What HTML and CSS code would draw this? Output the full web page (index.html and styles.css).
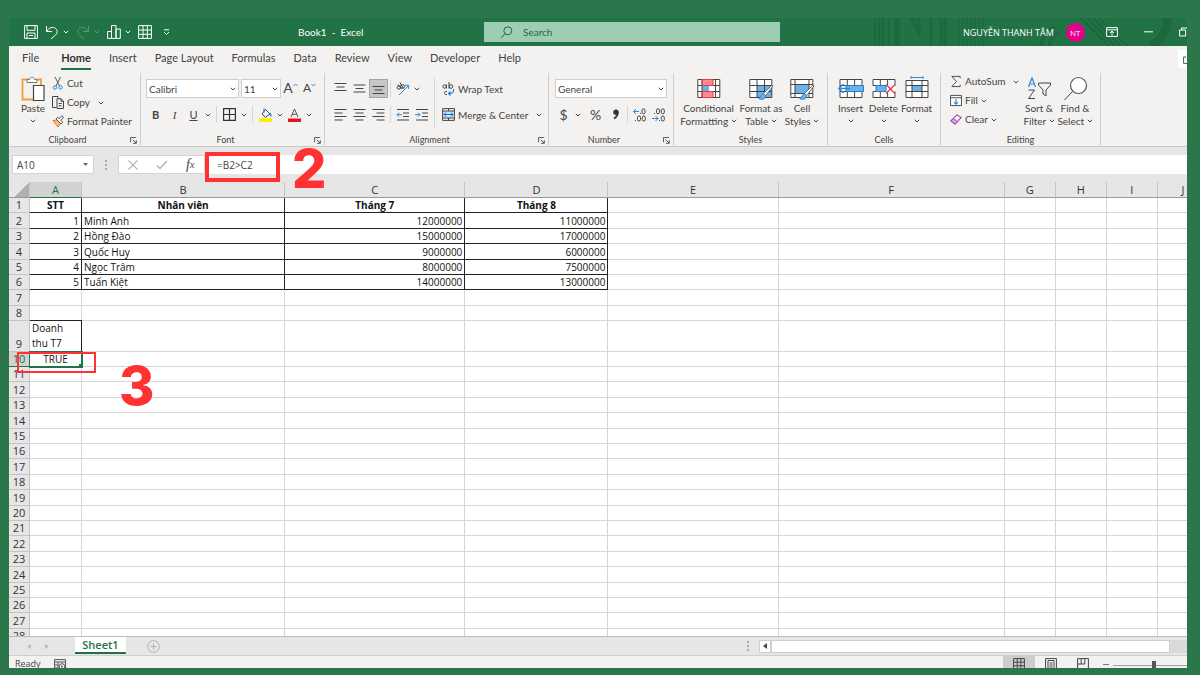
FILE: index.html
```html
<!DOCTYPE html>
<html lang="vi">
<head>
  <meta charset="UTF-8" />
  <meta name="viewport" content="width=device-width, initial-scale=1.0"/>
  <title>Book1 - Excel</title>
  <link rel="stylesheet" href="styles.css">
</head>
<body>
  <!-- Shared icons -->
  <svg class="defs" width="0" height="0">
    <symbol id="chev" viewBox="0 0 6 4"><path d="M.8.8 3 3 5.2.8" fill="none" stroke="currentColor"/></symbol>
    <symbol id="launch" viewBox="0 0 8 8"><path d="M.5 6V.5H7M3 3l4 4M7.2 3.5v3.7H3.5" fill="none" stroke="currentColor"/></symbol>
    <symbol id="brush" viewBox="0 0 16 18"><path d="M15 1 6 10l2 2.4L16 2z" fill="#fff" stroke="#555" stroke-width=".9"/><path d="M6 10.2c-2.300.3-2.500 3-5 5.300 3 1.500 7 .5 7.300-3z" fill="#6cb2ea" stroke="#2b7cc2"/></symbol>
  </svg>

  <div class="window">
    <header class="titlebar">
      <svg class="pattern" width="314" height="28" viewBox="0 0 314 28">
        <g stroke="#1b6039" fill="none" opacity=".55">
          <path d="M2 0v28M6 0v28M10 0v28M16 0v28" stroke-width="2"/>
          <path d="M24 0v28" stroke-width="5"/>
          <path d="M38 0h8v14zM58 0v28M68 0v28M72 0v28" stroke-width="3"/>
          <path d="M86 0v28M90 0v28M94 0v28M98 0v28M102 0v28M106 0v28M110 0v28"/>
          <path d="M168 28c2-10 6-16 14-20M176 28c2-8 5-12 10-14" stroke-width="3"/>
          <path d="M208 0l28 28M214 0l28 28M220 0l28 28M226 0l28 28" stroke-width="2"/>
          <path d="M294 0c1 12-5 21-16 28" stroke-width="9"/>
        </g>
      </svg>
      <div class="quick">
        <button aria-label="Save"><svg width="14" height="14" viewBox="0 0 14 14"><path d="M.6.6h12.800v12.800H.6zM3 .6v4.700h8V.6M3 13.400V8h8v5.400M5 10.500h4" class="line"/></svg></button>
        <button aria-label="Undo" class="undo"><svg width="14" height="15" viewBox="0 0 14 15"><path d="M1.500 1v5.500H7M1.700 6.300C4 2.500 8 1.200 10.700 3.500c2.600 2.500 1.400 5-.5 6.800L6 14" class="line"/></svg><svg class="chev"><use href="#chev"/></svg></button>
        <button aria-label="Redo" class="redo"><svg width="14" height="15" viewBox="0 0 14 15"><path d="M12.500 1v5.500H7M12.300 6.300C10 2.500 6 1.200 3.300 3.500c-2.600 2.500-1.400 5 .5 6.800L8 14" class="line"/></svg><svg class="chev"><use href="#chev"/></svg></button>
        <button aria-label="Chart"><svg width="14" height="14" viewBox="0 0 14 14"><path d="M.6 6.500h3.900v6.900H.6zM4.500.6H9v12.800H4.500zM9 4h4.300v9.400H9z" class="line"/></svg><svg class="chev"><use href="#chev"/></svg></button>
        <button aria-label="Table"><svg width="14" height="14" viewBox="0 0 14 14"><path d="M.6.6h12.800v12.800H.6zM5 .6v12.800M9.300.6v12.800M.6 5h12.800M.6 9.300h12.800" class="line"/></svg></button>
        <button aria-label="Customize" class="more"><svg width="7" height="7" viewBox="0 0 7 7"><path d="M1 .8h5M1 3l2.500 2.500L6 3" class="line"/></svg></button>
      </div>
      <h1 class="book">Book1&nbsp; -&nbsp; Excel</h1>
      <label class="search">
        <svg width="13" height="13" viewBox="0 0 13 13"><circle cx="7.800" cy="4.800" r="4" class="line"/><path d="M5 7.700.8 12.200" class="line"/></svg>
        <input type="text" placeholder="Search" aria-label="Search">
      </label>
      <div class="account">
        <span class="user">NGUYỄN THANH TÂM</span>
        <span class="avatar">NT</span>
        <button aria-label="Ribbon display"><svg width="12" height="10" viewBox="0 0 12 10"><path d="M.6.6h10.800v8.800H.6zM.6 2.800h10.800M6 8.500V4.500M4 6l2-2 2 2" class="line"/></svg></button>
        <button aria-label="Minimize"><svg width="9" height="10" viewBox="0 0 9 10"><path d="M0 4.800h9" class="line"/></svg></button>
        <button aria-label="Restore"><svg width="9" height="10" viewBox="0 0 9 10"><path d="M.6 3h6v6h-6zM2.500 3V1H9v6" class="line"/></svg></button>
      </div>
    </header>

    <nav class="tabs">
      <a href="#">File</a>
      <a href="#" class="active">Home</a>
      <a href="#">Insert</a>
      <a href="#">Page Layout</a>
      <a href="#">Formulas</a>
      <a href="#">Data</a>
      <a href="#">Review</a>
      <a href="#">View</a>
      <a href="#">Developer</a>
      <a href="#">Help</a>
      <button class="share" aria-label="Share"><svg width="9" height="9" viewBox="0 0 9 9"><path d="M8 2H5.600v6.400H9" class="line"/></svg></button>
    </nav>

    <div class="ribbon">
      <section class="group clipboard">
        <div class="group-body">
          <button class="big"><svg width="24" height="26" viewBox="0 0 24 26"><path d="M8 3.500H1.500v20h11M16 3.500h4V9" fill="none" stroke="#f0a030" stroke-width="1.800"/><path d="M6 3.500h2.500C9 .5 13 .5 13.500 3.500H16v3H6z" fill="#fff" stroke="#777"/><path d="M12.500 9.500h10.500v15H12.500z" fill="#fff" stroke="#444" stroke-width="1.200"/></svg><span>Paste</span><svg class="chev"><use href="#chev"/></svg></button>
          <div class="stack">
            <button><svg width="12" height="13" viewBox="0 0 12 13"><path d="m3 0 4.500 9M8.500 0 4 9" stroke="#555" fill="none"/><circle cx="3" cy="10.500" r="1.700" fill="none" stroke="#2b88d8"/><circle cx="8.500" cy="10.500" r="1.700" fill="none" stroke="#2b88d8"/></svg>Cut</button>
            <button><svg width="12" height="13" viewBox="0 0 12 13"><path d="M4.500 11.500H.5V.5H6v2" class="line"/><path d="M5 2.800h4.200L11.500 5v7.500H5zM9 3v2.300h2.400M6.700 7.500h3M6.700 9.800h3" class="line"/></svg>Copy<svg class="chev far"><use href="#chev"/></svg></button>
            <button><svg width="12" height="13" viewBox="0 0 12 13"><path d="M1 5.500 5 5l3.500 3.500L6 12z" fill="#f7c27e" stroke="#e07a1c"/><path d="m4 4 5 5 1.700-1.700L9 5.500 11.500 2 10 .8 7 3.500 5.600 2.300z" fill="#fff" stroke="#555"/></svg>Format Painter</button>
          </div>
        </div>
        <footer>Clipboard<svg class="launch"><use href="#launch"/></svg></footer>
      </section>

      <section class="group font">
        <div class="group-body rows">
          <div class="row">
            <select class="combo family" aria-label="Font"><option>Calibri</option></select>
            <select class="combo size" aria-label="Font size"><option>11</option></select>
            <button class="tool grow" aria-label="Increase font">A<svg width="5" height="4" viewBox="0 0 5 4"><path d="M.5 3l2-2 2 2" fill="none" stroke="#2b88d8"/></svg></button>
            <button class="tool shrink" aria-label="Decrease font">A<svg width="5" height="4" viewBox="0 0 5 4"><path d="M.5 1l2 2 2-2" fill="none" stroke="#2b88d8"/></svg></button>
          </div>
          <div class="row">
            <button class="tool"><b>B</b></button>
            <button class="tool"><i>I</i></button>
            <button class="tool"><u>U</u></button>
            <button class="drop" aria-label="Underline options"><svg class="chev"><use href="#chev"/></svg></button>
            <i class="sep"></i>
            <button class="tool" aria-label="Borders"><svg width="13" height="13" viewBox="0 0 13 13"><path d="M.6.6h11.800v11.800H.6zM6.500.6v11.800M.6 6.500h11.800" fill="none" stroke="#333" stroke-width="1.200"/></svg></button>
            <button class="drop" aria-label="Border options"><svg class="chev"><use href="#chev"/></svg></button>
            <i class="sep"></i>
            <button class="tool" aria-label="Fill color"><svg width="14" height="14" viewBox="0 0 14 14"><path d="M6.500 1.500 11 6 6.500 9.300 3 6z" class="line"/><path d="M5 .5v4M11 5c1 1.500 1.500 2.500.5 3.500" fill="none" stroke="#2b88d8" stroke-width="1.300"/><path d="M0 10.500h13V14H0z" fill="#ffee00"/></svg></button>
            <button class="drop" aria-label="Fill options"><svg class="chev"><use href="#chev"/></svg></button>
            <button class="tool" aria-label="Font color"><svg width="14" height="14" viewBox="0 0 14 14"><path d="m3 9 3.500-8L10 9M4.300 6.300h4.500" fill="none" stroke="#555"/><path d="M0 10.500h13V14H0z" fill="#e81123"/></svg></button>
            <button class="drop" aria-label="Color options"><svg class="chev"><use href="#chev"/></svg></button>
          </div>
        </div>
        <footer>Font<svg class="launch"><use href="#launch"/></svg></footer>
      </section>

      <section class="group align">
        <div class="group-body">
          <div class="rows">
            <div class="row">
              <button class="tool" aria-label="Top align"><svg class="ic" viewBox="0 0 13 13"><path d="M.5 1.500h12M2.500 5h8M.5 8.500h12" class="line"/></svg></button>
              <button class="tool" aria-label="Middle align"><svg class="ic" viewBox="0 0 13 13"><path d="M.5 3h12M2.500 6.500h8M.5 10h12" class="line"/></svg></button>
              <button class="tool on" aria-label="Bottom align"><svg class="ic" viewBox="0 0 13 13"><path d="M.5 4.500h12M2.500 8h8M.5 11.500h12" class="line"/></svg></button>
              <i class="sep thin"></i>
              <button class="tool" aria-label="Orientation"><svg width="14" height="14" viewBox="0 0 14 14"><circle cx="2.800" cy="5.500" r="1.700" class="line"/><circle cx="6.500" cy="4.500" r="1.900" class="line"/><path d="m2 2.500 3.500 4.500M4 .5 7 6" class="line"/><path d="M3 13 12.500 3.500M9 3.300h3.700V7" fill="none" stroke="#2b88d8"/></svg></button>
              <button class="drop" aria-label="Orientation options"><svg class="chev"><use href="#chev"/></svg></button>
            </div>
            <div class="row">
              <button class="tool" aria-label="Align left"><svg class="ic" viewBox="0 0 13 13"><path d="M.5 1.500h12M.5 5h8M.5 8.500h12M.5 12h8" class="line"/></svg></button>
              <button class="tool" aria-label="Center"><svg class="ic" viewBox="0 0 13 13"><path d="M.5 1.500h12M2.500 5h8M.5 8.500h12M2.500 12h8" class="line"/></svg></button>
              <button class="tool" aria-label="Align right"><svg class="ic" viewBox="0 0 13 13"><path d="M.5 1.500h12M4.500 5h8M.5 8.500h12M4.500 12h8" class="line"/></svg></button>
              <i class="sep thin"></i>
              <button class="tool" aria-label="Decrease indent"><svg class="ic" viewBox="0 0 13 13"><path d="M1 1.500h12M7 5h6M7 8.500h6M1 12h12" class="line"/><path d="M6 6.700H1M3 4.700l-2 2 2 2" fill="none" stroke="#2b88d8"/></svg></button>
              <button class="tool" aria-label="Increase indent"><svg class="ic" viewBox="0 0 13 13"><path d="M1 1.500h12M7 5h6M7 8.500h6M1 12h12" class="line"/><path d="M0 6.700h5M3 4.700l2 2-2 2" fill="none" stroke="#2b88d8"/></svg></button>
            </div>
          </div>
          <i class="sep tall"></i>
          <div class="rows">
            <button class="row"><svg width="13" height="14" viewBox="0 0 13 14"><circle cx="2.500" cy="4.500" r="1.700" class="line"/><path d="M4.500 2.500v4M7 0v6.500M5 9.500c-3-1-4 3.500 0 3" class="line"/><circle cx="9" cy="4.500" r="1.800" class="line"/><path d="M11.500 7v2c0 2-2 2.500-5 2.500M8.500 9.500l-2 2 2 2" fill="none" stroke="#2b88d8" stroke-width="1.200"/></svg>Wrap Text</button>
            <button class="row"><svg width="13" height="13" viewBox="0 0 13 13"><path d="M1 3h11v7H1z" fill="#cfe5f8"/><path d="M.6.6h11.800v11.800H.6zM.6 3h11.800M.6 10h11.800M6.500.6V3M6.500 10v2.400" class="line"/><path d="M2 6.500h9M4 4.500l-2 2 2 2M9 4.500l2 2-2 2" fill="none" stroke="#0b6fc4"/></svg>Merge &amp; Center<svg class="chev far"><use href="#chev"/></svg></button>
          </div>
        </div>
        <footer>Alignment<svg class="launch"><use href="#launch"/></svg></footer>
      </section>

      <section class="group number">
        <div class="group-body rows">
          <div class="row"><select class="combo format" aria-label="Number format"><option>General</option></select></div>
          <div class="row">
            <button class="tool sign">$</button>
            <button class="drop" aria-label="Currency options"><svg class="chev"><use href="#chev"/></svg></button>
            <button class="tool sign percent">%</button>
            <button class="tool" aria-label="Comma style"><svg width="8" height="11" viewBox="0 0 8 11"><circle cx="4" cy="3.200" r="2.700" fill="#333"/><path d="M5.500 3c.7 3-1 5-3.500 6.500" fill="none" stroke="#333" stroke-width="1.800"/></svg></button>
            <i class="sep thin"></i>
            <button class="tool" aria-label="Increase decimal"><svg width="13" height="14" viewBox="0 0 13 14"><path d="M6 3.500H.5M3 1 .5 3.500 3 6" fill="none" stroke="#2b88d8"/><rect x="9" y=".8" width="3" height="5" rx="1.500" class="line"/><rect x="4.500" y="8" width="3" height="5" rx="1.500" class="line"/><rect x="9.300" y="8" width="3" height="5" rx="1.500" class="line"/><path d="M2 12.500h1M7 5.500h1" class="line"/></svg></button>
            <button class="tool" aria-label="Decrease decimal"><svg width="13" height="14" viewBox="0 0 13 14"><path d="M0 10.500h6M3.500 8 6 10.500 3.500 13" fill="none" stroke="#2b88d8"/><rect x="4.500" y=".8" width="3" height="5" rx="1.500" class="line"/><rect x="9.300" y=".8" width="3" height="5" rx="1.500" class="line"/><rect x="9.300" y="8" width="3" height="5" rx="1.500" class="line"/><path d="M2 5.500h1M7 12.500h1" class="line"/></svg></button>
          </div>
        </div>
        <footer>Number<svg class="launch"><use href="#launch"/></svg></footer>
      </section>

      <section class="group styles">
        <div class="group-body">
          <button class="big wide"><svg width="24" height="26" viewBox="0 0 24 26"><path d="M.8 3.500h22v18h-22z" fill="#fff"/><path d="M5 3.500h11v6H5zM5 15.500h11v6H5z" fill="#ff8a8f"/><path d="M5 9.500h7v6H5z" fill="#6cb2ea"/><path d="M.8 3.500h22v18h-22zM.8 9.500h22M.8 15.500h22M5 3.500v18M18.500 3.500v18" class="line"/><path d="M5 3.500h11v6H5zM5 15.500h11v6H5z" fill="none" stroke="#e23b41"/></svg><span>Conditional<br>Formatting <svg class="chev"><use href="#chev"/></svg></span></button>
          <button class="big medium"><svg width="25" height="26" viewBox="0 0 25 26"><path d="M.8 3.500h22v18h-22z" fill="#fff"/><path d="M8 9.500h15v12H8z" fill="#6cb2ea"/><path d="M.8 3.500h22v18h-22zM.8 9.500h22M.8 15.500h22M8 3.500v18M15.500 3.500v18" class="line"/><use href="#brush" x="8" y="8" width="17" height="17"/></svg><span>Format as<br>Table <svg class="chev"><use href="#chev"/></svg></span></button>
          <button class="big"><svg width="25" height="26" viewBox="0 0 25 26"><path d="M.8 3.500h22v18h-22z" fill="#fff"/><path d="M5 8.500h14v9H5z" fill="#6cb2ea"/><path d="M.8 3.500h22v18h-22zM.8 8.500h22M.8 17.500h22M5 3.500v18M19 3.500v18" class="line"/><use href="#brush" x="8" y="8" width="17" height="17"/></svg><span>Cell<br>Styles <svg class="chev"><use href="#chev"/></svg></span></button>
        </div>
        <footer>Styles</footer>
      </section>

      <section class="group cells">
        <div class="group-body">
          <button class="big"><svg width="26" height="26" viewBox="0 0 26 26"><path d="M2 3.500h22v18H2z" fill="#fff"/><path d="M2 3.500h22v18H2zM2 9.500h22M2 15.500h22M9.300 3.500v18M16.600 3.500v18" class="line"/><path d="M8 9.500h17.500v6H8z" fill="#6cb2ea" stroke="#2b7cc2"/><path d="M12 12.500H.5M5.500 8l-4.700 4.500L5.500 17" fill="none" stroke="#2b88d8" stroke-width="1.300"/></svg><span>Insert</span><svg class="chev"><use href="#chev"/></svg></button>
          <button class="big"><svg width="26" height="26" viewBox="0 0 26 26"><path d="M2 3.500h22v18H2z" fill="#fff"/><path d="M2 9.500v-6h22v6M2 15.500v6h22v-6M2 9.500h12M2 15.500h12M9.300 3.500v6M16.600 3.500v6M9.300 15.500v6M16.600 15.500v6" class="line"/><path d="M5 9.500h10v6H5z" fill="#6cb2ea" stroke="#2b7cc2"/><path d="m15 8.500 9 9M24 8.500l-9 9" fill="none" stroke="#e8383d" stroke-width="1.300"/></svg><span>Delete</span><svg class="chev"><use href="#chev"/></svg></button>
          <button class="big"><svg width="26" height="26" viewBox="0 0 26 26"><path d="M2 4.500h22v17H2z" fill="#fff"/><path d="M8 9.500h10v6H8z" fill="#6cb2ea"/><path d="M2 4.500h22v17H2zM2 9.500h22M2 15.500h22M8 4.500v17M18 4.500v17" class="line"/><path d="M7 1.500h12M7 0v3M19 0v3" fill="none" stroke="#2b88d8"/></svg><span>Format</span><svg class="chev"><use href="#chev"/></svg></button>
        </div>
        <footer>Cells</footer>
      </section>

      <section class="group editing">
        <div class="group-body">
          <div class="stack">
            <button><svg width="12" height="13" viewBox="0 0 13 13"><path d="M11 3V1H2l5 5.500L2 12h9v-2" class="line"/></svg>AutoSum<svg class="chev far"><use href="#chev"/></svg></button>
            <button><svg width="12" height="13" viewBox="0 0 13 13"><path d="M.6 1h11.800v11H.6z" fill="#fff"/><path d="M.6 1h11.800v11H.6zM.6 3.500h11.800" class="line"/><path d="M6.500 5v5.500M4.300 8.300l2.200 2.200 2.200-2.200" fill="none" stroke="#2b88d8" stroke-width="1.200"/></svg>Fill<svg class="chev"><use href="#chev"/></svg></button>
            <button><svg width="12" height="13" viewBox="0 0 13 13"><path d="M1 8 7.500 1.500l4.500 3L5.500 11.500z" fill="#fff" stroke="#9b3fb5" stroke-width="1.200"/><path d="m1 8 2.500-2.500L8 8.700l-2.500 2.800z" fill="#d9a3e6" stroke="#9b3fb5"/></svg>Clear<svg class="chev"><use href="#chev"/></svg></button>
          </div>
          <button class="big"><svg width="25" height="26" viewBox="0 0 25 26"><path d="M1.500 11 5 2l3.500 9M2.800 8h4.400" fill="none" stroke="#2b88d8" stroke-width="1.200"/><path d="M1.500 14h6L1.500 22.500h6.500" class="line"/><path d="M11.500 7h12v2l-4.500 5v6l-3-2v-4l-4.500-5z" class="line"/></svg><span>Sort &amp;<br>Filter <svg class="chev"><use href="#chev"/></svg></span></button>
          <button class="big"><svg width="25" height="26" viewBox="0 0 25 26"><circle cx="15.500" cy="9.500" r="8" fill="#fff" stroke="#555" stroke-width="1.200"/><path d="M9.500 15.500 1.500 24" class="line"/></svg><span>Find &amp;<br>Select <svg class="chev"><use href="#chev"/></svg></span></button>
        </div>
        <footer>Editing</footer>
      </section>
    </div>

    <div class="formula-bar">
      <div class="name-box">
        <input type="text" value="A10" aria-label="Name box">
        <button aria-label="Names"><svg width="5" height="3" viewBox="0 0 5 3"><path d="M0 0h5L2.500 3z" fill="#666"/></svg></button>
      </div>
      <span class="dots"></span>
      <div class="fx">
        <button aria-label="Cancel"><svg width="10" height="10" viewBox="0 0 10 10"><path d="m.5.5 9 9M9.500.5l-9 9" fill="none" stroke="#b5b5b5" stroke-width="1.200"/></svg></button>
        <button aria-label="Enter"><svg width="12" height="10" viewBox="0 0 12 10"><path d="m.8 5.500 3.200 3L11 1" fill="none" stroke="#b5b5b5" stroke-width="1.500"/></svg></button>
        <button class="fn">f<small>x</small></button>
      </div>
      <input type="text" class="formula" value="=B2&gt;C2" aria-label="Formula">
    </div>

    <main class="sheet">
      <table>
        <colgroup>
          <col class="w-num"><col class="w-a"><col class="w-b"><col class="w-c"><col class="w-d"><col class="w-e"><col class="w-f"><col class="w-s"><col class="w-s"><col class="w-s"><col class="w-s">
        </colgroup>
        <thead>
          <tr><th class="corner"></th><th class="current">A</th><th>B</th><th>C</th><th>D</th><th>E</th><th>F</th><th>G</th><th>H</th><th>I</th><th>J</th></tr>
        </thead>
        <tbody id="rows"></tbody>
      </table>
    </main>

    <div class="sheet-tabs">
      <button class="nav" aria-label="Previous sheet"><svg width="4" height="5" viewBox="0 0 4 5"><path d="M4 0v5L0 2.500z" fill="#bbb"/></svg></button>
      <button class="nav" aria-label="Next sheet"><svg width="4" height="5" viewBox="0 0 4 5"><path d="M0 0v5l4-2.500z" fill="#bbb"/></svg></button>
      <button class="sheet-tab">Sheet1</button>
      <button class="add" aria-label="New sheet"><svg width="13" height="13" viewBox="0 0 13 13"><circle cx="6.500" cy="6.500" r="5.900" fill="none" stroke="#b5b5b5"/><path d="M6.500 3.500v6M3.500 6.500h6" stroke="#b5b5b5"/></svg></button>
      <span class="dots"></span>
      <div class="scroll">
        <button aria-label="Scroll left"><svg width="4" height="6" viewBox="0 0 4 6"><path d="M4 0v6L0 3z" fill="#444"/></svg></button>
        <span class="thumb"></span>
      </div>
    </div>

    <footer class="status">
      <span>Ready</span>
      <svg class="macro" width="13" height="12" viewBox="0 0 13 12"><path d="M.6.6h11v11H.6zM.6 3h11M.6 6h4M.6 9h3M4 3v8" fill="none" stroke="#555"/><circle cx="8" cy="7.500" r="2.800" fill="#f3f2f1" stroke="#555"/><circle cx="8" cy="7.500" r="1" fill="#555"/></svg>
      <div class="views">
        <button class="on" aria-label="Normal view"><svg width="12" height="12" viewBox="0 0 12 12"><path d="M.6.6h10.800v10.800H.6zM4.200.6v10.800M7.800.6v10.800M.6 4.200h10.800M.6 7.800h10.800" class="line"/></svg></button>
        <button aria-label="Page layout view"><svg width="12" height="12" viewBox="0 0 12 12"><path d="M.6.6h10.800v10.800H.6zM3 2.500h6v9H3zM4.500 5h3M4.500 7h3M4.500 9h3" class="line"/></svg></button>
        <button aria-label="Page break view"><svg width="12" height="12" viewBox="0 0 12 12"><path d="M.6.6h10.800v10.800H.6zM4.200.6V6M7.800.6V6M.6 6h7.200" class="line"/></svg></button>
      </div>
      <span class="minus"></span>
      <input type="range" value="55" aria-label="Zoom">
    </footer>

    <!-- Step markers -->
    <span class="mark mark-formula"></span>
    <span class="step step-2">2</span>
    <span class="mark mark-result"></span>
    <span class="step step-3">3</span>
  </div>

  <script>
    const data = {
      1: ["STT", "Nhân viên", "Tháng 7", "Tháng 8"],
      2: [1, "Minh Anh", 12000000, 11000000],
      3: [2, "Hồng Đào", 15000000, 17000000],
      4: [3, "Quốc Huy", 9000000, 6000000],
      5: [4, "Ngọc Trâm", 8000000, 7500000],
      6: [5, "Tuấn Kiệt", 14000000, 13000000],
      9: ["Doanh thu T7"],
      10: ["TRUE"]
    };

    // Build the 28 visible rows
    const tbody = document.getElementById("rows");
    for (let r = 1; r <= 28; r++) {
      const tr = document.createElement("tr");
      const head = document.createElement("th");
      head.textContent = r;
      tr.appendChild(head);

      for (let c = 0; c < 10; c++) {
        const td = document.createElement("td");
        const value = data[r] ? data[r][c] : undefined;
        if (value !== undefined) {
          td.textContent = value;
          td.classList.add("boxed");
          if (typeof value === "number") td.classList.add("num");
        }
        tr.appendChild(td);
      }

      if (r === 1) tr.className = "heading";
      if (r === 9) tr.className = "double";
      if (r === 10) {
        tr.className = "current";
        tr.cells[1].className = "selected";
      }
      tbody.appendChild(tr);
    }
  </script>
</body>
</html>
```
FILE: styles.css
```css
* {
  box-sizing: border-box;
}

body {
  margin: 0;
  height: 100vh;
  padding: 18px 13px 7px 9px;
  background: #2b774b;
  font-family: "Open Sans", "Noto Sans", sans-serif;
  font-size: 10px;
  color: #444;
  overflow: hidden;
}

button {
  display: flex;
  align-items: center;
  padding: 0;
  border: none;
  background: none;
  font: inherit;
  color: inherit;
  white-space: nowrap;
}

input,
select {
  font: inherit;
  color: inherit;
  border: none;
  min-width: 0;
}

svg {
  flex: none;
}

.defs {
  position: absolute;
}

.line {
  fill: none;
  stroke: currentColor;
}

.chev {
  width: 6px;
  height: 4px;
}

.window {
  position: relative;
  display: flex;
  flex-direction: column;
  height: 100%;
  overflow: hidden;
  background: #e6e6e6;
}

/* Title bar */
.titlebar {
  position: relative;
  flex: none;
  display: grid;
  grid-template-columns: 235px 240px 296px 1fr;
  align-items: center;
  height: 28px;
  background: #217346;
  color: #fff;
}

.pattern {
  position: absolute;
  right: 0;
  top: 0;
}

.quick {
  display: flex;
  align-items: center;
  padding-left: 15px;
  gap: 7px;
}

.quick button {
  gap: 4px;
}

.redo {
  opacity: 0.25;
}

.more {
  margin-left: 4px;
}

.book {
  margin: 0;
  padding-left: 54px;
  font-family: Lato, sans-serif;
  font-size: 10px;
  font-weight: normal;
}

.search {
  display: flex;
  align-items: center;
  gap: 8px;
  height: 20px;
  padding-left: 16px;
  background: #9fcdb3;
  color: #1e6b41;
  font-family: Lato, sans-serif;
}

.search input {
  flex: 1;
  background: none;
}

.search input::placeholder {
  color: #1e6b41;
}

.account {
  position: relative;
  display: flex;
  align-items: center;
  padding-left: 183px;
  overflow: hidden;
}

.user {
  font-size: 9px;
  white-space: nowrap;
}

.avatar {
  flex: none;
  width: 19px;
  margin: 0 21px 0 12px;
  border-radius: 50%;
  background: #e3008c;
  font-size: 8px;
  line-height: 19px;
  text-align: center;
}

.account button {
  margin-right: 26px;
}

/* Ribbon tabs */
.tabs {
  flex: none;
  display: flex;
  align-items: center;
  gap: 18px;
  height: 26px;
  padding-left: 13px;
  background: #f3f2f1;
  font-family: Lato, sans-serif;
  font-size: 11px;
}

.tabs a {
  color: #444;
  text-decoration: none;
  line-height: 20px;
  border-bottom: 2px solid transparent;
  white-space: nowrap;
}

.tabs a.active {
  margin-left: 4px;
  color: #333;
  font-weight: bold;
  border-color: #217346;
}

.share {
  width: 9px;
  height: 18px;
  margin-left: auto;
  background: #fff;
  color: #217346;
}

/* Ribbon */
.ribbon {
  flex: none;
  display: flex;
  height: 75px;
  background: #f3f2f1;
  border-bottom: 1px solid #c8c8c8;
  font-family: Lato, sans-serif;
}

.group {
  flex: none;
  display: flex;
  flex-direction: column;
  margin-top: 1px;
  border-right: 1px solid #d0cecc;
}

.group-body {
  display: flex;
  flex: 1;
}

.group footer {
  position: relative;
  font-size: 9px;
  line-height: 12px;
  text-align: center;
}

.clipboard footer,
.font footer,
.align footer,
.number footer {
  padding-right: 14px;
}

.launch {
  position: absolute;
  right: 3px;
  top: 3px;
  width: 7px;
  height: 7px;
}

.clipboard { width: 132px; }
.font { width: 184px; }
.align { width: 224px; }
.number { width: 125px; }
.styles { width: 154px; }
.cells { width: 113px; }
.editing { width: 160px; }

.big {
  flex-direction: column;
  align-items: center;
  padding-top: 3px;
  line-height: 13px;
}

.big > .chev {
  margin-top: 4px;
}

.big span .chev {
  vertical-align: 2px;
}

.stack {
  display: flex;
  flex-direction: column;
  gap: 6px;
  padding-top: 4px;
}

.stack button {
  gap: 3px;
  line-height: 13px;
}

.far {
  margin-left: 5px;
}

.clipboard .group-body {
  gap: 7px;
  padding-left: 12px;
}

.clipboard .big {
  width: 24px;
}

.rows {
  display: flex;
  flex-direction: column;
  gap: 7px;
  padding-top: 6px;
}

.row {
  display: flex;
  align-items: center;
  height: 19px;
}

.tool {
  flex: none;
  justify-content: center;
  width: 19px;
  height: 19px;
  font-size: 11px;
}

.tool i {
  font-family: "Liberation Serif", serif;
}

.tool.on {
  background: #c8c6c4;
  outline: 1px solid #a6a4a2;
  outline-offset: -1px;
}

.ic {
  width: 13px;
  height: 13px;
}

.drop {
  flex: none;
  justify-content: center;
  width: 10px;
  height: 19px;
}

.sep {
  width: 1px;
  height: 17px;
  margin: 0 3px;
  background: #d8d6d4;
}

.sep.thin {
  margin: 0 2px;
}

.sep.tall {
  height: 50px;
  margin: 5px 7px 0 3px;
}

.font .rows,
.group-body.rows {
  padding-left: 5px;
}

.combo {
  height: 19px;
  padding: 0 2px;
  border: 1px solid #d0cecc;
  background: #fff url("data:image/svg+xml,%3Csvg xmlns='http://www.w3.org/2000/svg' width='6' height='4'%3E%3Cpath d='M.8.8 3 3 5.2.8' fill='none' stroke='%23444'/%3E%3C/svg%3E") no-repeat right 2px center;
  appearance: none;
}

.family { width: 93px; }
.size { width: 40px; margin-left: 2px; }
.format { width: 112px; margin-left: 1px; }

.grow,
.shrink {
  align-items: flex-start;
  font-size: 14px;
  line-height: 18px;
}

.grow svg,
.shrink svg {
  margin-top: 4px;
}

.shrink {
  font-size: 12px;
}

.align .group-body {
  padding-left: 6px;
}

.align button.row {
  gap: 3px;
}

.sign {
  font-size: 14px;
}

.percent {
  margin: 0 1px 0 3px;
}

.styles .group-body {
  padding-left: 6px;
}

.styles .big {
  width: 34px;
}

.styles .big.wide {
  width: 57px;
}

.styles .big.medium {
  width: 48px;
}

.cells .group-body {
  padding-left: 6px;
}

.cells .big {
  width: 33px;
}

.editing .group-body {
  padding-left: 9px;
}

.editing .stack {
  width: 71px;
  padding-top: 2px;
}

.editing .big {
  width: 36px;
}

/* Formula bar */
.formula-bar {
  flex: none;
  display: flex;
  align-items: center;
  height: 35px;
  padding-left: 3px;
}

.name-box {
  display: flex;
  width: 82px;
  height: 19px;
  padding-right: 5px;
  background: #fff;
  border: 1px solid #d4d4d4;
}

.name-box input {
  flex: 1;
  padding: 0 4px;
}

.dots {
  width: 2px;
  height: 10px;
  background: repeating-linear-gradient(#aaa 0 2px, transparent 2px 4px);
}

.formula-bar .dots {
  margin: 0 11px;
}

.fx {
  display: flex;
  align-items: center;
  gap: 18px;
  width: 87px;
  height: 19px;
  padding-left: 9px;
  background: #fff;
  border: 1px solid #d4d4d4;
}

.fn {
  font: italic 14px "Liberation Serif", serif;
}

.fn small {
  font-size: 10px;
}

.formula {
  flex: 1;
  height: 19px;
  padding: 0 12px;
  background: #fff;
}

/* Grid */
.sheet {
  flex: 1;
  min-height: 0;
  overflow: hidden;
  background: #fff;
}

table {
  width: 1200px;
  table-layout: fixed;
  border-collapse: separate;
  border-spacing: 0;
  color: #111;
}

.w-num { width: 21px; }
.w-a { width: 52px; }
.w-b { width: 203px; }
.w-c { width: 180px; }
.w-d { width: 143px; }
.w-e { width: 170px; }
.w-f { width: 226px; }
.w-s { width: 51px; }

th,
td {
  height: 15px;
  padding: 0 2px;
  border-right: 1px solid #d6d6d6;
  border-bottom: 1px solid #d6d6d6;
  line-height: 14px;
  vertical-align: bottom;
}

th {
  padding: 0;
  background: #e6e6e6;
  border-color: #c4c4c4;
  font-size: 11px;
  font-weight: normal;
  color: #333;
}

thead th {
  height: 16px;
  border-bottom-color: #999;
}

tbody tr:nth-child(5n+2) td,
tbody tr:nth-child(5n+4) td {
  height: 16px;
}

.corner {
  background: linear-gradient(135deg, #e6e6e6 60%, #b0b0b0 60%);
}

th.current,
.current th {
  background: #d2d2d2;
  color: #217346;
  border-bottom-color: #217346;
}

.boxed {
  border-color: #222;
}

.heading td {
  font-weight: bold;
  text-align: center;
}

.num {
  text-align: right;
}

tbody tr.double td {
  height: 31px;
  line-height: 15px;
}

.double .boxed {
  box-shadow: 0 -1px #222;
}

.selected {
  position: relative;
  border-color: #217346;
  text-align: center;
  outline: 1px solid #217346;
}

.selected::after {
  content: "";
  position: absolute;
  right: -2px;
  bottom: -2px;
  width: 4px;
  height: 4px;
  background: #217346;
}

/* Sheet tabs */
.sheet-tabs {
  flex: none;
  display: flex;
  align-items: center;
  height: 20px;
  border-top: 1px solid #bdbdbd;
  border-bottom: 1px solid #cfcfcf;
}

.nav {
  margin-left: 18px;
}

.nav + .nav {
  margin-left: 14px;
}

.sheet-tab {
  align-self: flex-start;
  justify-content: center;
  width: 51px;
  height: 17px;
  margin-left: 26px;
  background: #fff;
  border-bottom: 2px solid #217346;
  color: #217346;
  font-size: 11px;
  font-weight: 600;
  line-height: 14px;
}

.add {
  margin-left: 21px;
}

.sheet-tabs .dots {
  margin-left: auto;
}

.scroll {
  display: flex;
  width: 428px;
  height: 13px;
  margin-left: 10px;
  background: #dadada;
}

.scroll button {
  justify-content: center;
  width: 12px;
  background: #fff;
  border: 1px solid #cfcfcf;
}

.thumb {
  width: 399px;
  background: #fff;
  border: 1px solid #cfcfcf;
}

/* Status bar */
.status {
  flex: none;
  display: flex;
  align-items: flex-start;
  height: 12px;
  padding-left: 6px;
  background: #f3f2f1;
  font-size: 9px;
  line-height: 16px;
  overflow: hidden;
}

.macro {
  margin: 3px 0 0 13px;
}

.views {
  display: flex;
  margin-left: auto;
}

.views button {
  justify-content: center;
  align-items: flex-start;
  width: 32px;
  height: 20px;
  padding-top: 2px;
}

.views .on {
  background: #cfcdcb;
}

.minus {
  width: 6px;
  height: 1px;
  margin: 8px 4px 0;
  background: #777;
}

.status input {
  appearance: none;
  flex: none;
  width: 74px;
  height: 1px;
  margin: 9px 0 0;
  background: #a0a0a0;
}

.status input::-webkit-slider-thumb {
  appearance: none;
  width: 4px;
  height: 10px;
  background: #555;
}

/* Step markers */
.mark {
  position: absolute;
  border: 4px solid #ff3131;
}

.mark-formula {
  left: 196px;
  top: 134px;
  width: 75px;
  height: 30px;
}

.mark-result {
  left: 8px;
  top: 334px;
  width: 79px;
  height: 21px;
  border-width: 2px;
}

.step {
  position: absolute;
  font-family: Inter, sans-serif;
  font-size: 54px;
  font-weight: 800;
  line-height: 54px;
  color: #ff3131;
}

.step-2 {
  left: 283px;
  top: 124px;
}

.step-3 {
  left: 110px;
  top: 341px;
}
```
